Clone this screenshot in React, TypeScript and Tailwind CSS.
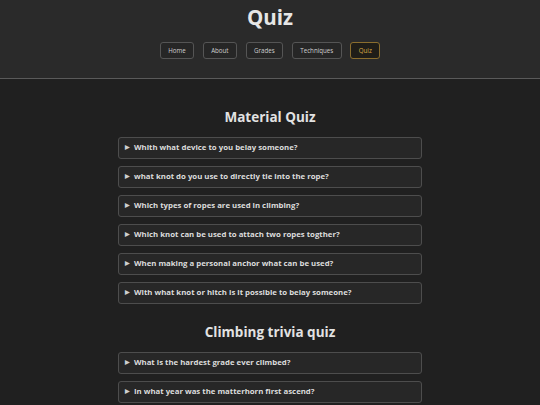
const navItems = ["Home", "About", "Grades", "Techniques", "Quiz"];

const materialQuestions = [
  "Whith what device to you belay someone?",
  "what knot do you use to directly tie into the rope?",
  "Which types of ropes are used in climbing?",
  "Which knot can be used to attach two ropes togther?",
  "When making a personal anchor what can be used?",
  "With what knot or hitch is it possible to belay someone?",
];

const triviaQuestions = [
  "What is the hardest grade ever climbed?",
  "In what year was the matterhorn first ascend?",
];

function Question({ text }: { text: string }) {
  return (
    <details className="rounded-[3px] border border-[#4d4d4d] bg-[#272727]">
      <summary className="flex h-[20px] cursor-pointer list-none items-center gap-[4px] pl-[6px] text-[7.8px] font-bold text-[#dcdcdc]">
        <span className="text-[5.5px] leading-none text-[#cfcfcf]">▶</span>
        {text}
      </summary>
    </details>
  );
}

function QuizSection({ title, questions }: { title: string; questions: string[] }) {
  return (
    <section className="mx-auto w-[304px]">
      <h2 className="text-center text-[13.5px] leading-[18px] font-bold text-[#e2e2e2]">{title}</h2>
      <div className="mt-[11.5px] flex flex-col gap-[7px]">
        {questions.map((q) => (
          <Question key={q} text={q} />
        ))}
      </div>
    </section>
  );
}

export default function App() {
  return (
    <div className="min-h-screen bg-[#202020] font-['Open_Sans',sans-serif]">
      {/* Header */}
      <header className="h-[79px] border-b border-[#5a5a5a] bg-[#2a2a2a] pt-[5px]">
        <h1 className="text-center text-[20.5px] leading-[24px] font-bold text-[#e6e6e6]">Quiz</h1>
        <nav className="mt-[13px] flex justify-center gap-[8.5px]">
          {navItems.map((item) => (
            <a
              key={item}
              href="#"
              className={
                item === "Quiz"
                  ? "flex h-[17px] items-center rounded-[3px] border border-[#8a6d2e] bg-[#1f1d18] px-[7.5px] text-[6.2px] text-[#d9ab45]"
                  : "flex h-[17px] items-center rounded-[3px] border border-[#555] bg-[#262626] px-[7.5px] text-[6.2px] text-[#cfcfcf]"
              }
            >
              {item}
            </a>
          ))}
        </nav>
      </header>

      {/* Quizzes */}
      <main className="flex flex-col gap-[18.5px] pt-[28.5px] pb-[20px]">
        <QuizSection title="Material Quiz" questions={materialQuestions} />
        <QuizSection title="Climbing trivia quiz" questions={triviaQuestions} />
      </main>
    </div>
  );
}
